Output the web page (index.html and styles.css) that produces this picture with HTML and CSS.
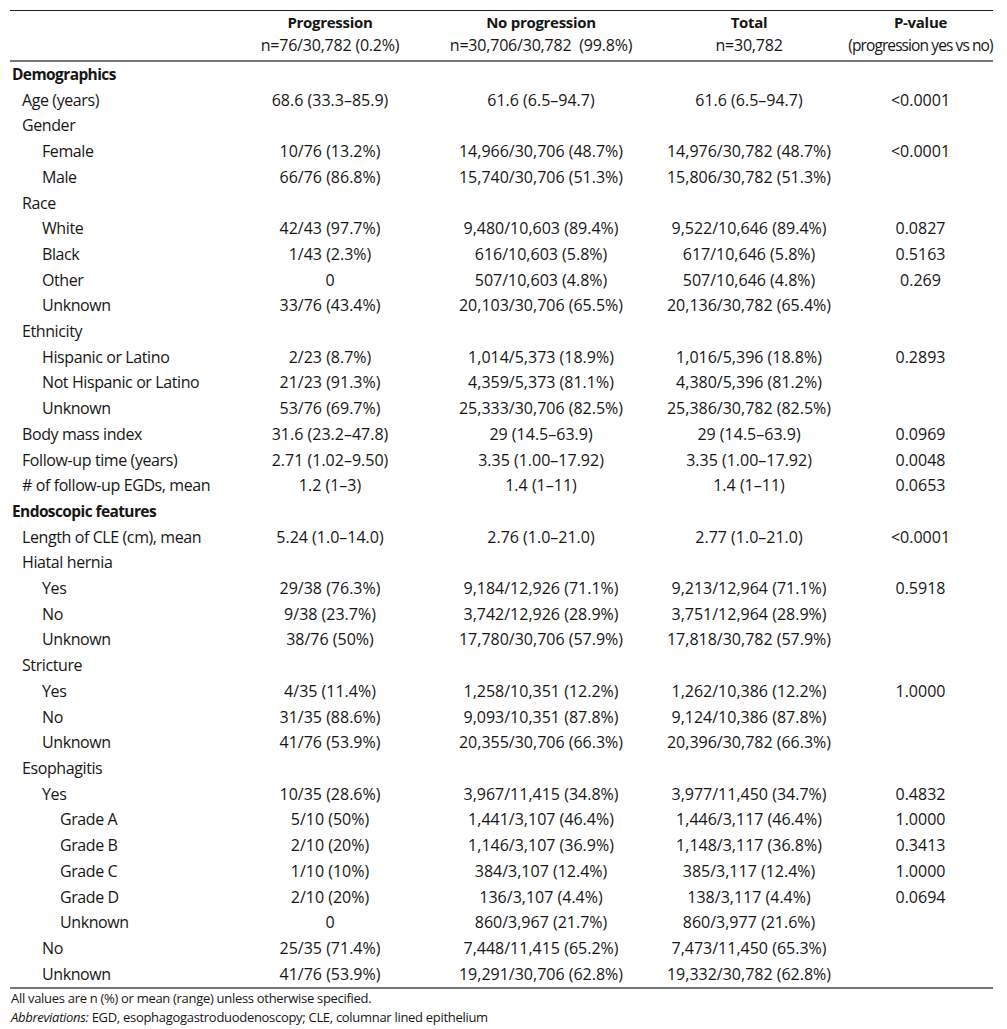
FILE: index.html
```html
<!DOCTYPE html>
<html>
<head>
<meta charset="utf-8">
<link rel="stylesheet" href="styles.css">
</head>
<body>
<div class="wrap">
<table class="tbl">
<colgroup>
<col class="c1"><col class="c2"><col class="c3"><col class="c4"><col class="c5">
</colgroup>
<thead>
<tr class="h1"><th></th><th>Progression</th><th>No progression</th><th>Total</th><th>P-value</th></tr>
<tr class="h2"><th></th><td>n=76/30,782 (0.2%)</td><td>n=30,706/30,782&nbsp; (99.8%)</td><td>n=30,782</td><td class="small">(progression yes vs no)</td></tr>
</thead>
<tbody>
<tr><td class="sec">Demographics</td><td></td><td></td><td></td><td></td></tr>
<tr><td class="l1">Age (years)</td><td>68.6 (33.3–85.9)</td><td>61.6 (6.5–94.7)</td><td>61.6 (6.5–94.7)</td><td>&lt;0.0001</td></tr>
<tr><td class="l1">Gender</td><td></td><td></td><td></td><td></td></tr>
<tr><td class="l2">Female</td><td>10/76 (13.2%)</td><td>14,966/30,706 (48.7%)</td><td>14,976/30,782 (48.7%)</td><td>&lt;0.0001</td></tr>
<tr><td class="l2">Male</td><td>66/76 (86.8%)</td><td>15,740/30,706 (51.3%)</td><td>15,806/30,782 (51.3%)</td><td></td></tr>
<tr><td class="l1">Race</td><td></td><td></td><td></td><td></td></tr>
<tr><td class="l2">White</td><td>42/43 (97.7%)</td><td>9,480/10,603 (89.4%)</td><td>9,522/10,646 (89.4%)</td><td>0.0827</td></tr>
<tr><td class="l2">Black</td><td>1/43 (2.3%)</td><td>616/10,603 (5.8%)</td><td>617/10,646 (5.8%)</td><td>0.5163</td></tr>
<tr><td class="l2">Other</td><td>0</td><td>507/10,603 (4.8%)</td><td>507/10,646 (4.8%)</td><td>0.269</td></tr>
<tr><td class="l2">Unknown</td><td>33/76 (43.4%)</td><td>20,103/30,706 (65.5%)</td><td>20,136/30,782 (65.4%)</td><td></td></tr>
<tr><td class="l1">Ethnicity</td><td></td><td></td><td></td><td></td></tr>
<tr><td class="l2">Hispanic or Latino</td><td>2/23 (8.7%)</td><td>1,014/5,373 (18.9%)</td><td>1,016/5,396 (18.8%)</td><td>0.2893</td></tr>
<tr><td class="l2">Not Hispanic or Latino</td><td>21/23 (91.3%)</td><td>4,359/5,373 (81.1%)</td><td>4,380/5,396 (81.2%)</td><td></td></tr>
<tr><td class="l2">Unknown</td><td>53/76 (69.7%)</td><td>25,333/30,706 (82.5%)</td><td>25,386/30,782 (82.5%)</td><td></td></tr>
<tr><td class="l1">Body mass index</td><td>31.6 (23.2–47.8)</td><td>29 (14.5–63.9)</td><td>29 (14.5–63.9)</td><td>0.0969</td></tr>
<tr><td class="l1">Follow-up time (years)</td><td>2.71 (1.02–9.50)</td><td>3.35 (1.00–17.92)</td><td>3.35 (1.00–17.92)</td><td>0.0048</td></tr>
<tr><td class="l1"># of follow-up EGDs, mean</td><td>1.2 (1–3)</td><td>1.4 (1–11)</td><td>1.4 (1–11)</td><td>0.0653</td></tr>
<tr><td class="sec">Endoscopic features</td><td></td><td></td><td></td><td></td></tr>
<tr><td class="l1">Length of CLE (cm), mean</td><td>5.24 (1.0–14.0)</td><td>2.76 (1.0–21.0)</td><td>2.77 (1.0–21.0)</td><td>&lt;0.0001</td></tr>
<tr><td class="l1">Hiatal hernia</td><td></td><td></td><td></td><td></td></tr>
<tr><td class="l2">Yes</td><td>29/38 (76.3%)</td><td>9,184/12,926 (71.1%)</td><td>9,213/12,964 (71.1%)</td><td>0.5918</td></tr>
<tr><td class="l2">No</td><td>9/38 (23.7%)</td><td>3,742/12,926 (28.9%)</td><td>3,751/12,964 (28.9%)</td><td></td></tr>
<tr><td class="l2">Unknown</td><td>38/76 (50%)</td><td>17,780/30,706 (57.9%)</td><td>17,818/30,782 (57.9%)</td><td></td></tr>
<tr><td class="l1">Stricture</td><td></td><td></td><td></td><td></td></tr>
<tr><td class="l2">Yes</td><td>4/35 (11.4%)</td><td>1,258/10,351 (12.2%)</td><td>1,262/10,386 (12.2%)</td><td>1.0000</td></tr>
<tr><td class="l2">No</td><td>31/35 (88.6%)</td><td>9,093/10,351 (87.8%)</td><td>9,124/10,386 (87.8%)</td><td></td></tr>
<tr><td class="l2">Unknown</td><td>41/76 (53.9%)</td><td>20,355/30,706 (66.3%)</td><td>20,396/30,782 (66.3%)</td><td></td></tr>
<tr><td class="l1">Esophagitis</td><td></td><td></td><td></td><td></td></tr>
<tr><td class="l2">Yes</td><td>10/35 (28.6%)</td><td>3,967/11,415 (34.8%)</td><td>3,977/11,450 (34.7%)</td><td>0.4832</td></tr>
<tr><td class="l3">Grade A</td><td>5/10 (50%)</td><td>1,441/3,107 (46.4%)</td><td>1,446/3,117 (46.4%)</td><td>1.0000</td></tr>
<tr><td class="l3">Grade B</td><td>2/10 (20%)</td><td>1,146/3,107 (36.9%)</td><td>1,148/3,117 (36.8%)</td><td>0.3413</td></tr>
<tr><td class="l3">Grade C</td><td>1/10 (10%)</td><td>384/3,107 (12.4%)</td><td>385/3,117 (12.4%)</td><td>1.0000</td></tr>
<tr><td class="l3">Grade D</td><td>2/10 (20%)</td><td>136/3,107 (4.4%)</td><td>138/3,117 (4.4%)</td><td>0.0694</td></tr>
<tr><td class="l3">Unknown</td><td>0</td><td>860/3,967 (21.7%)</td><td>860/3,977 (21.6%)</td><td></td></tr>
<tr><td class="l2">No</td><td>25/35 (71.4%)</td><td>7,448/11,415 (65.2%)</td><td>7,473/11,450 (65.3%)</td><td></td></tr>
<tr><td class="l2">Unknown</td><td>41/76 (53.9%)</td><td>19,291/30,706 (62.8%)</td><td>19,332/30,782 (62.8%)</td><td></td></tr>
</tbody>
</table>
<div class="notes">
<p>All values are n (%) or mean (range) unless otherwise specified.</p>
<p><em>Abbreviations:</em> EGD, esophagogastroduodenoscopy; CLE, columnar lined epithelium</p>
</div>
</div>
</body>
</html>
```
FILE: styles.css
```css
html, body {
  margin: 0;
  padding: 0;
  background: #ffffff;
}
body {
  font-family: "Open Sans", Lato, "Liberation Sans", sans-serif;
  font-size: 16px;
  color: #161616;
}
.wrap {
  padding: 10px 14px 0 10px;
  width: 983px;
}
.tbl {
  width: 983px;
  border-collapse: collapse;
  table-layout: fixed;
  border-top: 1px solid #222;
  border-bottom: 2px solid #777;
}
.c1 { width: 218px; }
.c2 { width: 204px; }
.c3 { width: 218px; }
.c4 { width: 198px; }
.c5 { width: 145px; }
.tbl th, .tbl td {
  padding: 0;
  text-align: center;
  white-space: nowrap;
  font-weight: normal;
  letter-spacing: 0;
}
.tbl thead th {
  font-weight: bold;
  font-size: 15px;
  letter-spacing: -0.3px;
}
.tbl thead td { letter-spacing: -0.2px; }
.h1 th { line-height: 23px; padding-top: 0; }
.h2 td, .h2 th { line-height: 23px; padding-bottom: 3px; border-bottom: 2px solid #777; }
.tbl .h2 .small { font-size: 15.5px; letter-spacing: -0.9px; }
.tbl tbody td {
  height: 25.7px;
  line-height: 25.7px;
}
.tbl tbody td:first-child { text-align: left; letter-spacing: -0.4px; }
.tbl tbody td.sec { font-weight: bold; padding-left: 2px; font-size: 15.5px; letter-spacing: -0.6px; }
.tbl td.l1 { padding-left: 12px; }
.tbl td.l2 { padding-left: 32px; }
.tbl td.l3 { padding-left: 50px; }
.notes p {
  margin: 0;
  line-height: 19px;
  padding-left: 1px;
  font-size: 13px;
  letter-spacing: -0.3px;
}
```
